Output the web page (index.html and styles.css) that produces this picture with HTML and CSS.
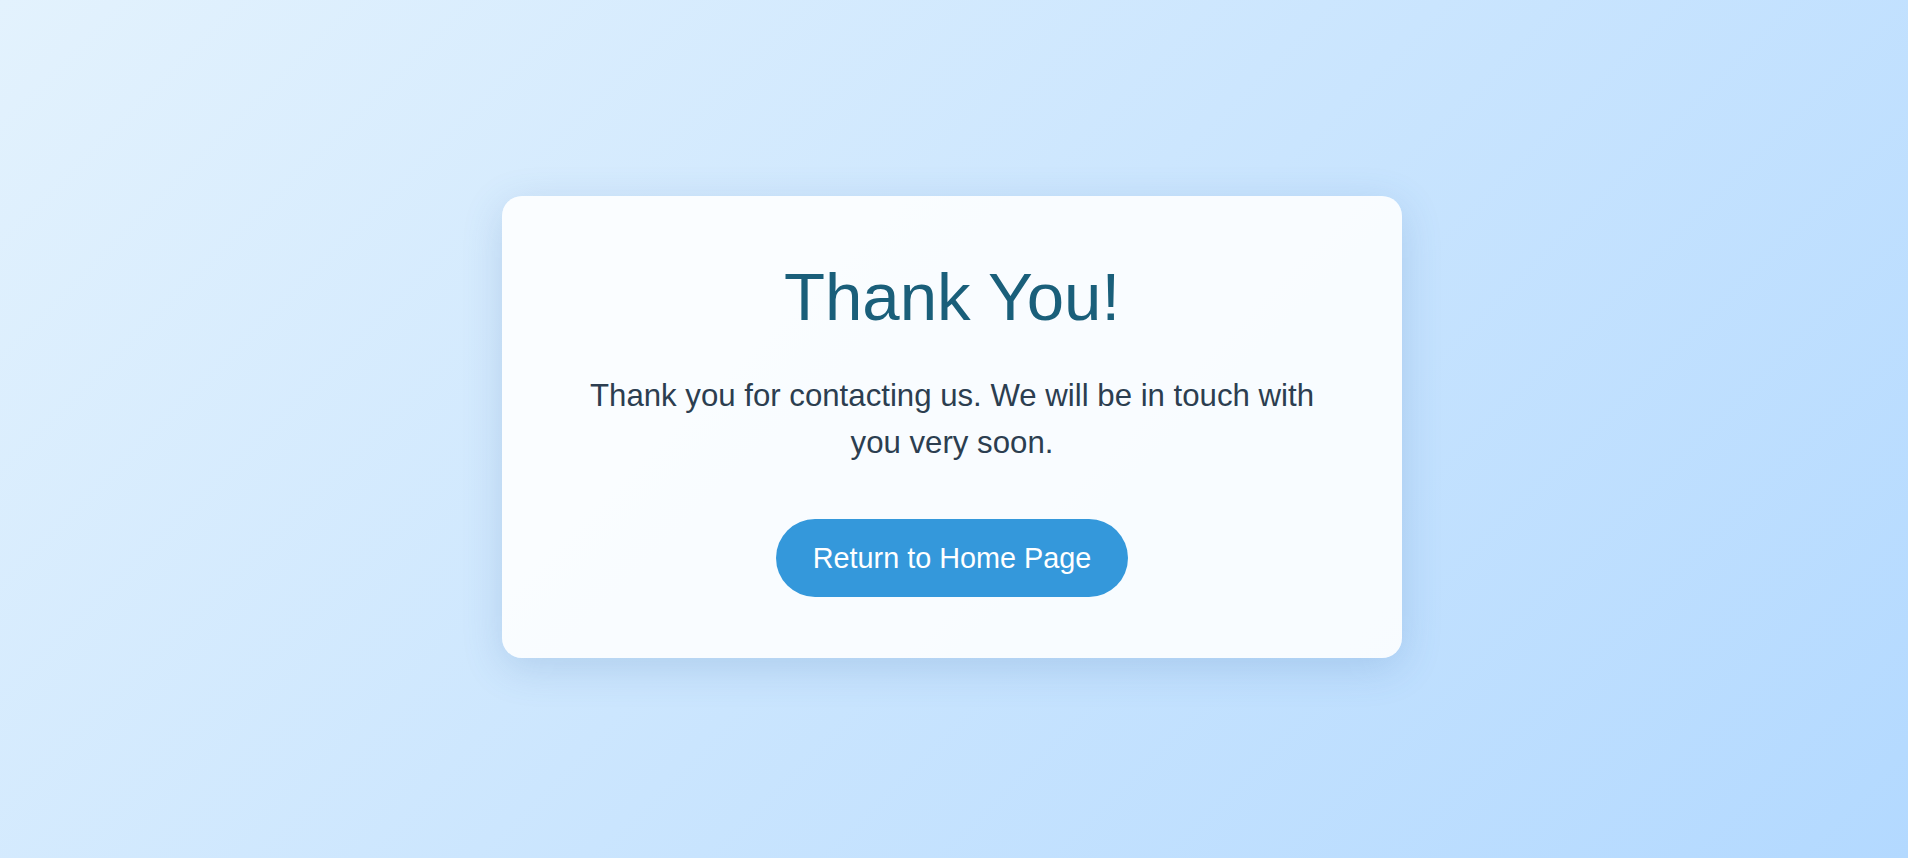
FILE: index.html
```html
<!DOCTYPE html>
<html lang="en">
<head>
<meta charset="utf-8">
<title>Thank You</title>
<link rel="stylesheet" href="styles.css">
</head>
<body>
<main class="page">
  <section class="card">
    <h1 class="title">Thank You!</h1>
    <p class="message">Thank you for contacting us. We will be in touch with you very soon.</p>
    <a class="home-btn" href="#">Return to Home Page</a>
  </section>
</main>
</body>
</html>
```

FILE: styles.css
```css
html, body {
  margin: 0;
  padding: 0;
}

body {
  font-family: "Liberation Sans", Arial, sans-serif;
  background: linear-gradient(135deg, #e3f2fd 0%, #b3d9ff 100%);
  min-height: 100vh;
}

.page {
  min-height: 100vh;
  display: flex;
  align-items: center;
  justify-content: center;
  box-sizing: border-box;
  padding: 0 4px 4px 0;
}

.card {
  width: 900px;
  box-sizing: border-box;
  padding: 62px 72px 61px;
  background: rgba(255, 255, 255, 0.88);
  border-radius: 20px;
  box-shadow: 0 10px 40px rgba(60, 110, 170, 0.2);
  display: flex;
  flex-direction: column;
  align-items: center;
  text-align: center;
}

.title {
  margin: 0 0 38px;
  font-size: 67.2px;
  font-weight: normal;
  line-height: normal;
  color: #1a5f7a;
}

.message {
  margin: 0 0 53px;
  font-size: 31.2px;
  line-height: 1.5;
  color: #2c3e50;
}

.home-btn {
  display: inline-block;
  padding: 23px 37px 22px;
  font-size: 28.8px;
  line-height: normal;
  color: #ffffff;
  background: #3498db;
  border-radius: 50px;
  text-decoration: none;
}
```
